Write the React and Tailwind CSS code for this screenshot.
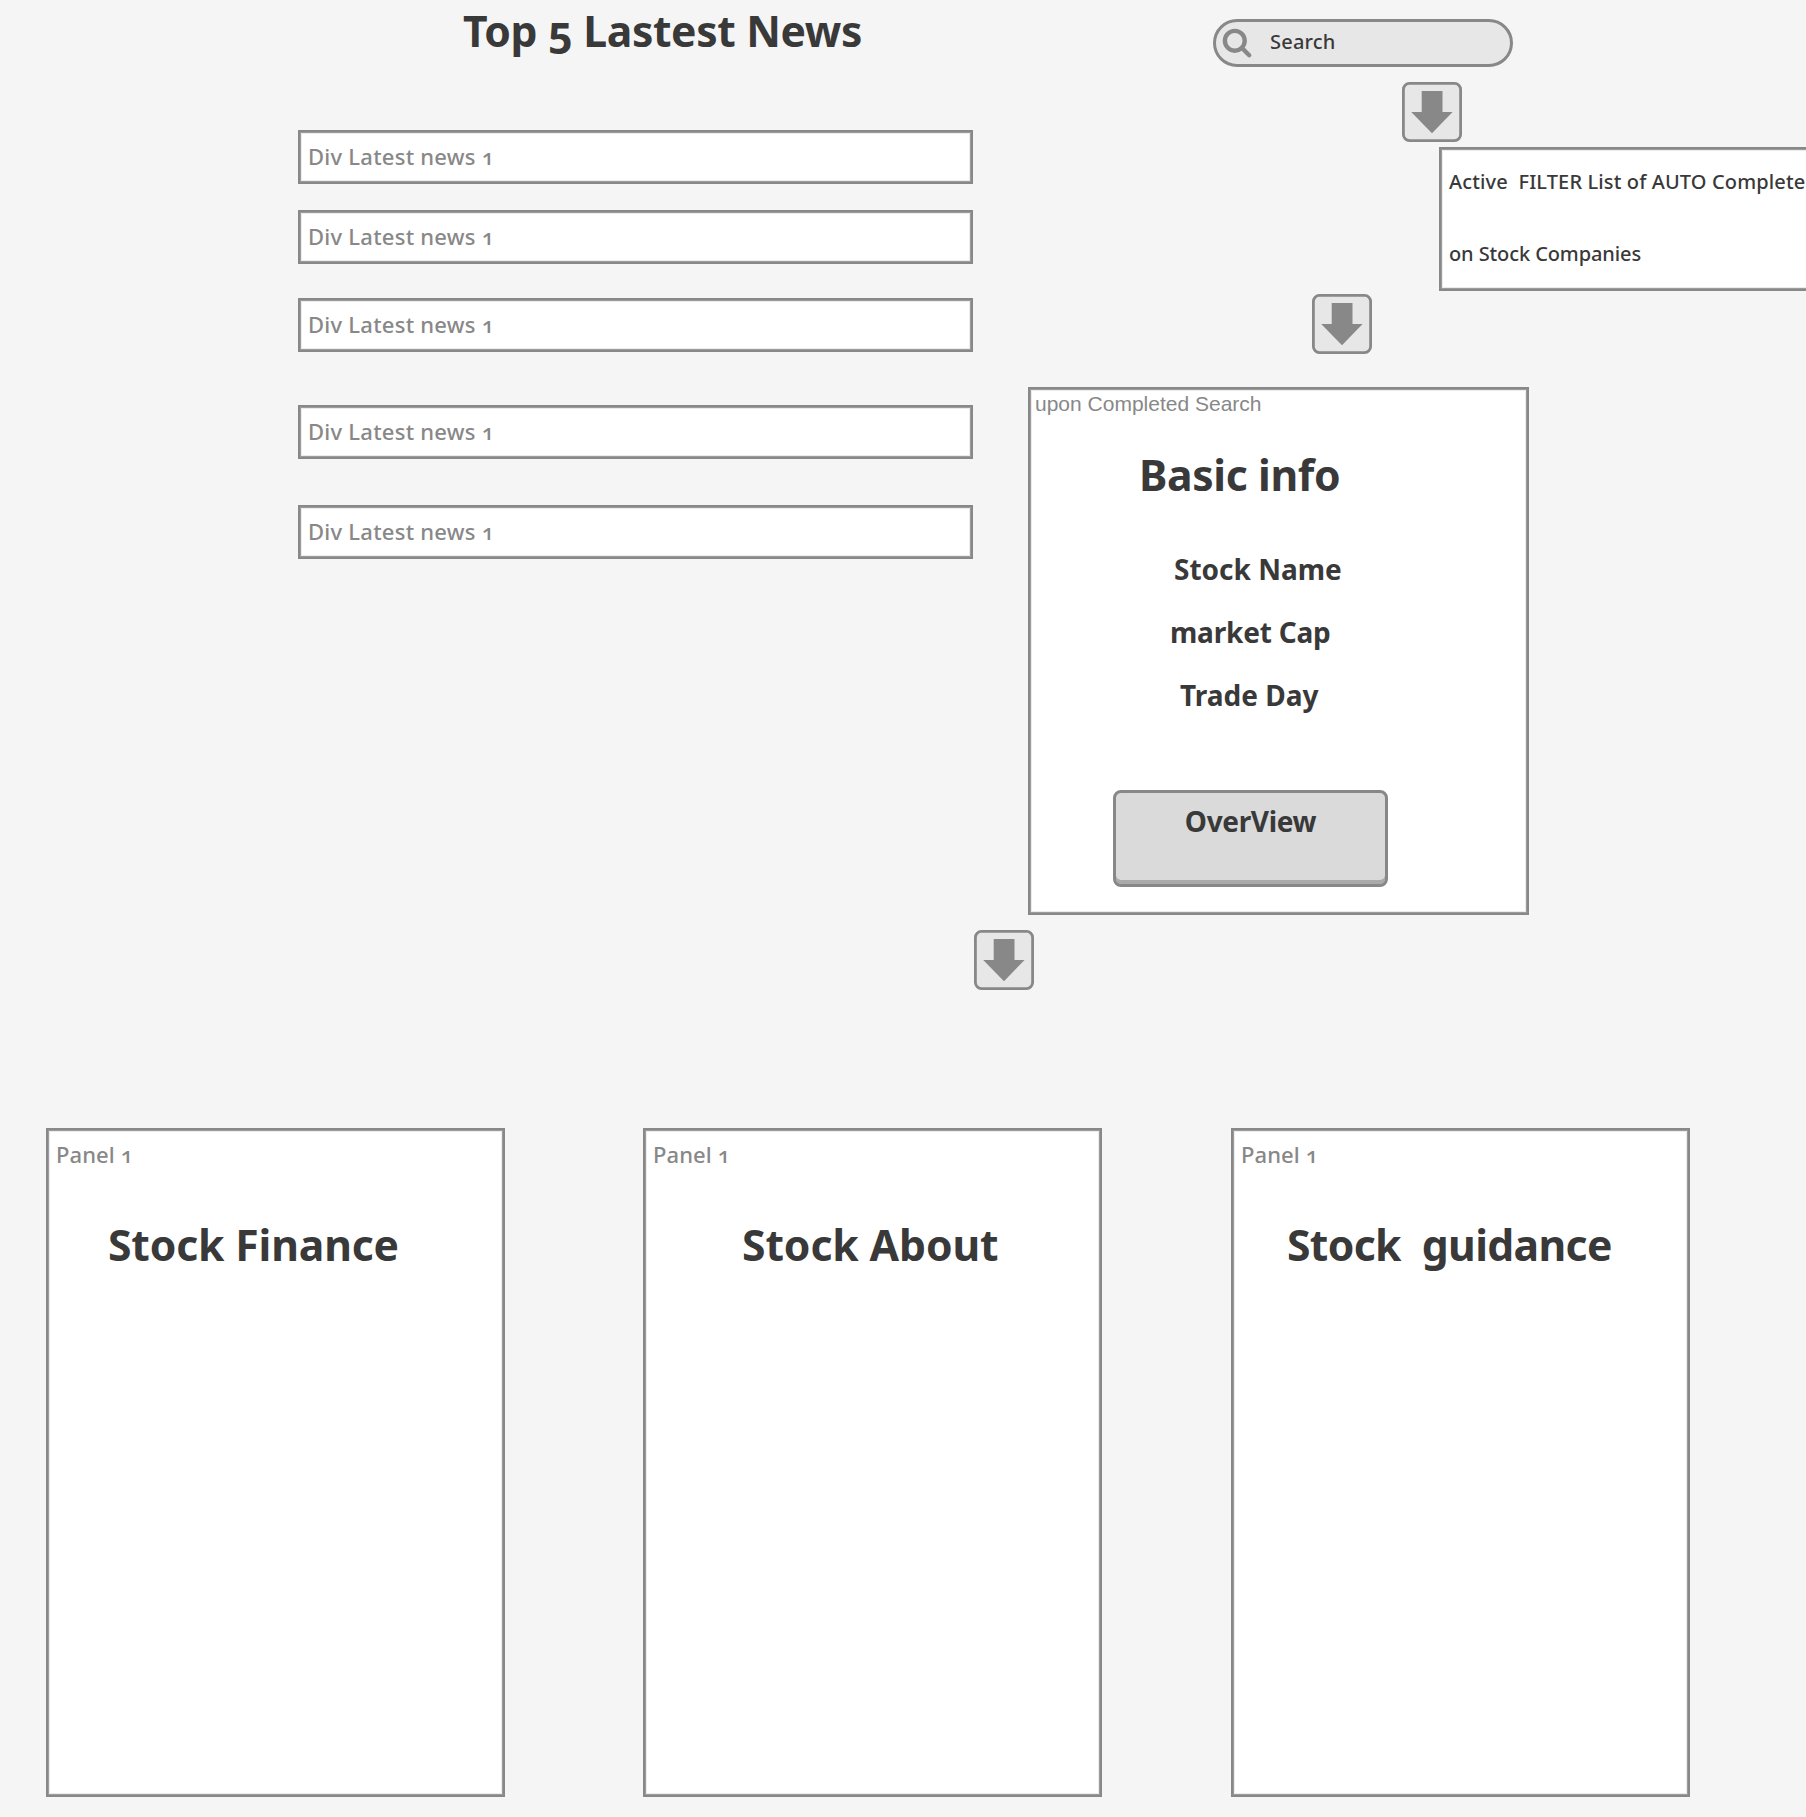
const frame = "border-2 border-[#888888] bg-white shadow-[inset_0_0_0_1px_#9c9c9c,inset_0_0_0_2px_#ececec]";
const heading = "text-[42.67px] leading-[48px] font-bold text-[#393939]";
const subheading = "text-[28px] leading-[36px] font-bold text-[#393939]";
const label = "text-[22px] leading-[30px] font-medium text-[#888888]";

function ArrowTile({ className }) {
  return (
    <div className={`h-[60px] w-[60px] shrink-0 ${className}`}>
      <svg viewBox="0 0 60 60" className="block h-[60px] w-[60px]">
        <rect x="1.4" y="1.4" width="57.2" height="57.2" rx="6" fill="#e7e7e7" stroke="#888888" strokeWidth="2.8" />
        <path d="M19.7 8.9H40.5V30H50.6L30 51.2L9.2 30H19.7Z" fill="#888888" />
      </svg>
    </div>
  );
}

function SearchField() {
  return (
    <div className="ml-[185px] flex h-12 w-[300px] rounded-full border-[3px] border-[#888888] bg-[#e7e7e7]">
      <svg viewBox="0 0 42 42" className="h-[42px] w-[42px] shrink-0" fill="none" stroke="#888888" strokeWidth="4.4" strokeLinecap="round">
        <circle cx="18.8" cy="18.8" r="9.9" />
        <path d="M26 26L33.2 33.2" />
      </svg>
      <span className="ml-3 mt-[5px] text-[20px] leading-[30px] font-medium tracking-[0.2px] text-[#393939]">Search</span>
    </div>
  );
}

const news = [
  { text: "Div Latest news 1", gap: "mt-[75px]" },
  { text: "Div Latest news 1", gap: "mt-[26px]" },
  { text: "Div Latest news 1", gap: "mt-[34px]" },
  { text: "Div Latest news 1", gap: "mt-[53px]" },
  { text: "Div Latest news 1", gap: "mt-[46px]" },
];

const panels = [
  { title: "Stock Finance", place: "ml-[46px]", inset: "pl-[60px] tracking-[-0.15px]" },
  { title: "Stock About", place: "ml-[138px]", inset: "pl-[97px] tracking-[-0.1px]" },
  { title: "Stock  guidance", place: "ml-[129px]", inset: "pl-[54px] tracking-[-0.65px]" },
];

export default function App() {
  return (
    <main className="h-[1817px] w-[1806px] overflow-hidden bg-[#f5f5f5] font-['Noto_Sans',sans-serif] whitespace-pre [font-variant-numeric:oldstyle-nums]">
      <div className="flex">
        <section className="w-[1028px] shrink-0 pt-[7px] pl-[298px]">
          <h1 className={`${heading} pl-[165px] tracking-[-0.35px]`}>Top 5 Lastest News</h1>
          {news.map((item, i) => (
            <div key={i} className={`${frame} ${item.gap} h-[54px] w-[675px] pt-[9px] pl-2`}>
              <p className={`${label} tracking-[0.25px]`}>{item.text}</p>
            </div>
          ))}
        </section>

        <section className="w-[778px] shrink-0 pt-[19px]">
          <SearchField />
          <ArrowTile className="mt-[15px] ml-[374px]" />
          <div className={`${frame} mt-[5px] ml-[411px] h-36 w-[480px] pt-[18px] pl-2 text-[20px] font-medium text-[#393939]`}>
            <p className="leading-[30px] tracking-[0.13px]">Active  FILTER List of AUTO Complete</p>
            <p className="mt-[42px] leading-[30px] tracking-[-0.1px]">on Stock Companies</p>
          </div>
          <ArrowTile className="mt-[3px] ml-[284px]" />
          <div className={`${frame} mt-[33px] h-[528px] w-[501px]`}>
            <p className="mt-[3px] pl-[5px] font-['Liberation_Sans',sans-serif] text-[21px] leading-6 text-[#888888]">upon Completed Search</p>
            <h2 className={`${heading} mt-[35px] pl-[109px] tracking-[-0.35px]`}>Basic info</h2>
            <p className={`${subheading} mt-[52px] pl-[144px]`}>Stock Name</p>
            <p className={`${subheading} mt-[27px] pl-[140px] tracking-[-0.2px]`}>market Cap</p>
            <p className={`${subheading} mt-[27px] pl-[150px]`}>Trade Day</p>
            <button className="mt-[77px] ml-[83px] block h-[97px] w-[275px] rounded-lg border-[3px] border-[#888888] bg-[#dadada] shadow-[inset_0_-4px_0_#aaaaaa]">
              <span className={`${subheading} mt-[-36px] block tracking-[-0.35px]`}>OverView</span>
            </button>
          </div>
        </section>
      </div>

      <ArrowTile className="mt-[15px] ml-[974px]" />

      <div className="mt-[138px] flex">
        {panels.map((p) => (
          <section key={p.title} className={`${frame} ${p.place} h-[669px] w-[459px] shrink-0 pt-[9px]`}>
            <p className={`${label} pl-2 tracking-[0.1px]`}>Panel 1</p>
            <h2 className={`${heading} ${p.inset} mt-[52px]`}>{p.title}</h2>
          </section>
        ))}
      </div>
    </main>
  );
}
